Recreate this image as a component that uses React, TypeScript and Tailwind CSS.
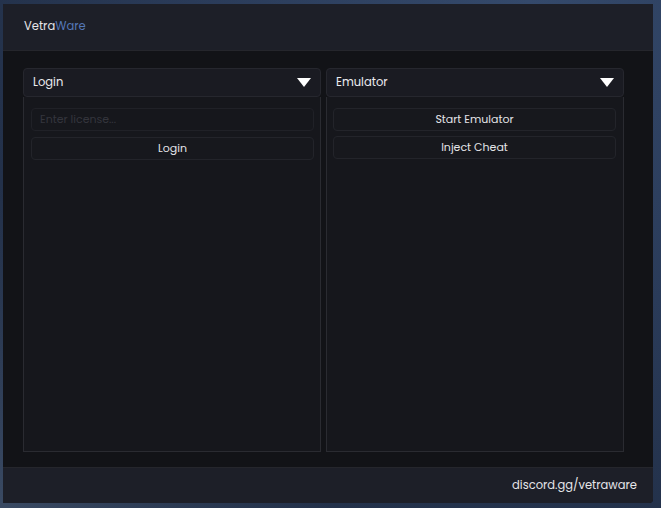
import React, { useState } from 'react';

const FONT = { fontFamily: 'Poppins, Inter, "Noto Sans", sans-serif' };

// --- dropdown panel ---
const Caret = () => (
  <svg width="14" height="9" viewBox="0 0 14 9" className="shrink-0">
    <polygon points="0,0 14,0 7,9" fill="#ffffff" />
  </svg>
);

const Panel = ({ title, children }: { title: string; children: React.ReactNode }) => (
  <div className="w-[298px] flex flex-col">
    <div className="h-[29px] flex items-center justify-between pl-[9px] pr-[9px] bg-[#1a1b22] border border-[#26272e] rounded-[4px] text-[11.5px] text-[#ececf0]">
      <span>{title}</span>
      <Caret />
    </div>
    <div className="h-[355px] bg-[#16171c] border border-t-0 border-[#2a2b31] flex flex-col">
      {children}
    </div>
  </div>
);

const Btn = ({ label }: { label: string }) => (
  <button className="h-[23px] w-full rounded-[4px] bg-[#17181d] border border-[#23242a] text-[11px] text-[#e4e4e8] flex items-center justify-center">
    {label}
  </button>
);

export default function App() {
  const [license, setLicense] = useState('');

  return (
    <div
      className="w-[661px] h-[508px] pt-[4px] pl-[3px] overflow-hidden"
      style={{ ...FONT, background: 'radial-gradient(ellipse at 80% 0%, #34496b 0%, #2a3b59 45%, #23314a 75%, #3a4a63 100%)' }}
    >
      <div className="w-[650px] h-[499px] flex flex-col bg-[#121317] rounded-br-[4px] overflow-hidden">
        {/* header */}
        <div className="h-[47px] shrink-0 flex items-center pl-[21px] bg-[#1d1f28] border-b border-[#25262c] text-[11.5px]">
          <span className="text-[#e6e6ea]">Vetra</span>
          <span className="text-[#5578b8]">Ware</span>
        </div>

        {/* body */}
        <div className="flex-1 flex gap-[5px] pt-[17px] pl-[20px]">
          <Panel title="Login">
            <div className="flex flex-col gap-[6px] pt-[11px] pl-[7px] pr-[6px]">
              <input
                value={license}
                onChange={e => setLicense(e.target.value)}
                placeholder="Enter license..."
                className="h-[23px] w-full rounded-[4px] bg-[#16171c] border border-[#202127] px-[8px] text-[11px] text-[#e4e4e8] placeholder:text-[#34353c] outline-none"
              />
              <Btn label="Login" />
            </div>
          </Panel>
          <Panel title="Emulator">
            <div className="flex flex-col gap-[5px] pt-[11px] pl-[6px] pr-[7px]">
              <Btn label="Start Emulator" />
              <Btn label="Inject Cheat" />
            </div>
          </Panel>
        </div>

        {/* footer */}
        <div className="h-[36px] shrink-0 flex items-center justify-end pr-[16px] bg-[#1d1f28] border-t border-[#25262c] text-[11.5px] text-[#e6e6ea]">
          discord.gg/vetraware
        </div>
      </div>
    </div>
  );
}
